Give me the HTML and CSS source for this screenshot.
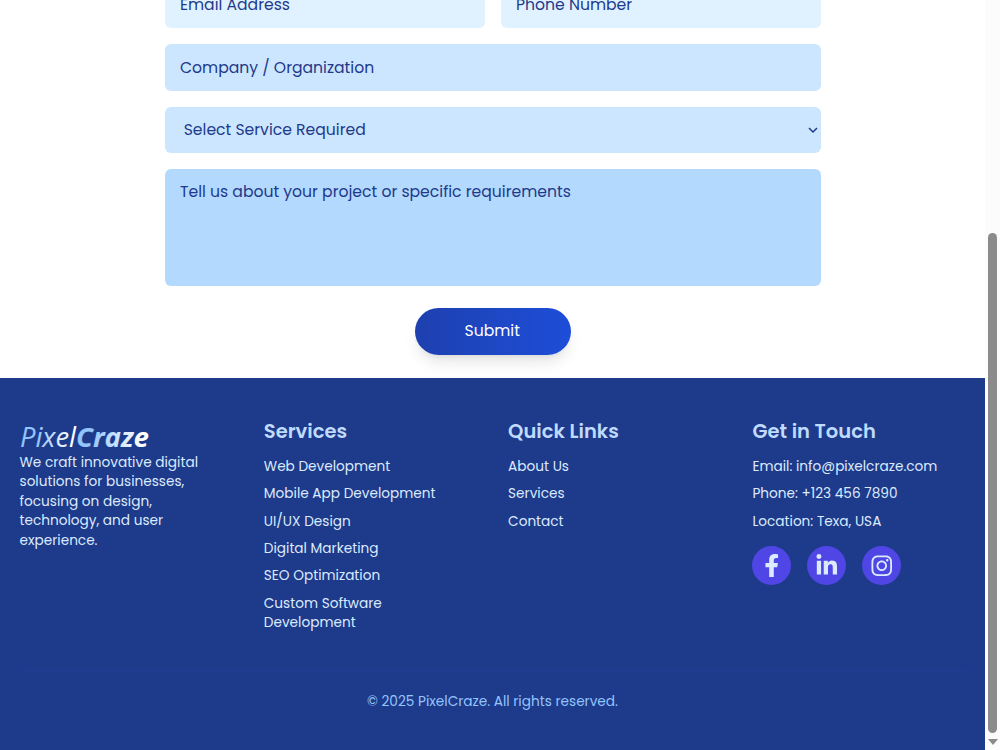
FILE: index.html
```html
<!DOCTYPE html>
<html lang="en">
<head>
    <meta charset="UTF-8">
    <title>PixelCraze</title>
    <link rel="stylesheet" href="styles.css">
</head>
<body>
    <div class="page">
        <form class="contact-form">
            <div class="row">
                <input class="field light" type="email" placeholder="Email Address">
                <input class="field light" type="tel" placeholder="Phone Number">
            </div>
            <input class="field" type="text" placeholder="Company / Organization">
            <div class="select-wrap">
                <select class="field select">
                    <option>Select Service Required</option>
                </select>
                <svg class="chevron" width="10" height="7" viewBox="0 0 10 7"><path d="M1 1l4 4 4-4" fill="none" stroke="#1e3a8a" stroke-width="1.5"/></svg>
            </div>
            <textarea class="field message" placeholder="Tell us about your project or specific requirements"></textarea>
            <button class="submit" type="button">Submit</button>
        </form>

        <footer class="footer">
            <div class="columns">
                <div class="column">
                    <div class="logo">
                        <svg width="140" height="36" viewBox="0 0 140 36">
                            <defs>
                                <linearGradient id="thin" x1="0" x2="1">
                                    <stop offset="0.3" stop-color="#93c5fd"/>
                                    <stop offset="0.9" stop-color="#ffffff"/>
                                </linearGradient>
                                <linearGradient id="thick" x1="0" x2="1">
                                    <stop offset="0.2" stop-color="#93c5fd"/>
                                    <stop offset="0.9" stop-color="#ffffff"/>
                                </linearGradient>
                            </defs>
                            <text class="logo-thin" x="0" y="29" textLength="56" lengthAdjust="spacingAndGlyphs" fill="url(#thin)">Pixel</text>
                            <text class="logo-thick" x="56" y="29" textLength="73" lengthAdjust="spacingAndGlyphs" fill="url(#thick)">Craze</text>
                        </svg>
                    </div>
                    <p class="about">We craft innovative digital<br>solutions for businesses,<br>focusing on design,<br>technology, and user<br>experience.</p>
                </div>
                <div class="column">
                    <h3>Services</h3>
                    <ul>
                        <li>Web Development</li>
                        <li>Mobile App Development</li>
                        <li>UI/UX Design</li>
                        <li>Digital Marketing</li>
                        <li>SEO Optimization</li>
                        <li>Custom Software<br>Development</li>
                    </ul>
                </div>
                <div class="column">
                    <h3>Quick Links</h3>
                    <ul>
                        <li>About Us</li>
                        <li>Services</li>
                        <li>Contact</li>
                    </ul>
                </div>
                <div class="column">
                    <h3>Get in Touch</h3>
                    <ul>
                        <li>Email: info@pixelcraze.com</li>
                        <li>Phone: +123 456 7890</li>
                        <li>Location: Texa, USA</li>
                    </ul>
                    <div class="social">
                        <a class="icon">
                            <svg width="23.5" height="23.5" viewBox="0 0 320 512"><path d="M279.14 288l14.22-92.66h-88.91v-60.13c0-25.35 12.42-50.06 52.24-50.06h40.42V6.26S260.43 0 225.36 0c-73.22 0-121.08 44.38-121.08 124.72v70.62H22.89V288h81.39v224h100.17V288z"/></svg>
                        </a>
                        <a class="icon">
                            <svg width="23.5" height="23.5" viewBox="0 0 448 512"><path d="M100.28 448H7.4V148.9h92.88zM53.79 108.1C24.09 108.1 0 83.5 0 53.8a53.79 53.79 0 0 1 107.58 0c0 29.7-24.1 54.3-53.79 54.3zM447.9 448h-92.68V302.4c0-34.7-.7-79.2-48.29-79.2-48.29 0-55.69 37.7-55.69 76.7V448h-92.78V148.9h89.08v40.8h1.3c12.4-23.5 42.69-48.3 87.88-48.3 94 0 111.28 61.9 111.28 142.3V448z"/></svg>
                        </a>
                        <a class="icon">
                            <svg width="23.5" height="23.5" viewBox="0 0 448 512"><path d="M224.1 141c-63.6 0-114.9 51.3-114.9 114.9s51.3 114.9 114.9 114.9S339 319.5 339 255.9 287.7 141 224.1 141zm0 189.6c-41.1 0-74.7-33.5-74.7-74.7s33.5-74.7 74.7-74.7 74.7 33.5 74.7 74.7-33.6 74.7-74.7 74.7zm146.4-194.3c0 14.9-12 26.8-26.8 26.8-14.9 0-26.8-12-26.8-26.8s12-26.8 26.8-26.8 26.8 12 26.8 26.8zm76.1 27.2c-1.7-35.9-9.9-67.7-36.2-93.9-26.2-26.2-58-34.4-93.9-36.2-37-2.1-147.9-2.1-184.9 0-35.8 1.7-67.6 9.9-93.9 36.1s-34.4 58-36.2 93.9c-2.1 37-2.1 147.9 0 184.9 1.7 35.9 9.9 67.7 36.2 93.9s58 34.4 93.9 36.2c37 2.1 147.9 2.1 184.9 0 35.9-1.7 67.7-9.9 93.9-36.2 26.2-26.2 34.4-58 36.2-93.9 2.1-37 2.1-147.8 0-184.8zM398.8 388c-7.8 19.6-22.9 34.7-42.6 42.6-29.5 11.7-99.5 9-132.1 9s-102.7 2.6-132.1-9c-19.6-7.8-34.7-22.9-42.6-42.6-11.7-29.5-9-99.5-9-132.1s-2.6-102.7 9-132.1c7.8-19.6 22.9-34.7 42.6-42.6 29.5-11.7 99.5-9 132.1-9s102.7-2.6 132.1 9c19.6 7.8 34.7 22.9 42.6 42.6 11.7 29.5 9 99.5 9 132.1s2.7 102.7-9 132.1z"/></svg>
                        </a>
                    </div>
                </div>
            </div>
            <div class="copyright">© 2025 PixelCraze. All rights reserved.</div>
        </footer>
    </div>
    <div class="scrollbar">
        <div class="thumb"></div>
        <div class="arrow"></div>
    </div>
</body>
</html>
```
FILE: styles.css
```css
* {
    box-sizing: border-box;
}
body {
    margin: 0;
    display: flex;
    height: 750px;
    overflow: hidden;
    background: #fff;
    font-family: Poppins, Inter, sans-serif;
}
.page {
    width: 985px;
    height: 750px;
}
.contact-form {
    width: 656px;
    height: 397px;
    margin: -19px 0 0 164.7px;
    display: flex;
    flex-direction: column;
    gap: 16px;
}
.row {
    display: flex;
    gap: 16px;
}
.field {
    width: 100%;
    height: 47px;
    flex-shrink: 0;
    padding: 0 15.3px;
    border: none;
    border-radius: 6px;
    background: #cce6ff;
    color: #1e3a8a;
    font: 15.63px Poppins, Inter, sans-serif;
}
.row .field {
    flex: 1;
    min-width: 0;
}
.field::placeholder {
    color: #1e3a8a;
    opacity: 1;
}
.light {
    background: #e0f2ff;
}
.select-wrap {
    position: relative;
    height: 46px;
    margin-bottom: -0.5px;
}
.select {
    display: block;
    height: 46px;
    padding: 0 15px 1px 19px;
    appearance: none;
}
.chevron {
    position: absolute;
    right: 3px;
    top: 20px;
}
.message {
    height: 117.5px;
    padding-top: 11.4px;
    line-height: 23.4px;
    background: #b3d9ff;
    resize: none;
}
.submit {
    align-self: center;
    width: 156px;
    height: 47px;
    margin-top: 6px;
    padding: 0 7px 2px 6px;
    border: none;
    border-radius: 24px;
    background: linear-gradient(to right, #1e40af, #1d4ed8);
    box-shadow: 0 10px 15px -3px rgba(0, 0, 0, 0.1), 0 4px 6px -4px rgba(0, 0, 0, 0.1);
    color: #fff;
    font: 15.63px Poppins, Inter, sans-serif;
}
.footer {
    height: 371.5px;
    padding: 39.6px 19.5px 0;
    background: #1e3a8a;
    color: #dbeafe;
    font-size: 13.67px;
    line-height: 19.53px;
}
.columns {
    display: grid;
    grid-template-columns: repeat(4, 1fr);
    gap: 31.2px;
    height: 252.4px;
}
.column {
    white-space: nowrap;
}
.logo {
    height: 35px;
}
.logo svg {
    display: block;
    overflow: visible;
}
.logo-thin, .logo-thick {
    font-family: "Open Sans", sans-serif;
    font-size: 27px;
    font-style: italic;
    font-weight: 400;
}
.logo-thick {
    font-weight: 700;
}
.about {
    margin: 0;
}
h3 {
    margin: 0 0 12.1px;
    color: #bfdbfe;
    font-size: 19.53px;
    font-weight: 600;
    line-height: 27.3px;
}
ul {
    margin: 0;
    padding: 0;
    list-style: none;
}
li {
    margin-bottom: 7.81px;
}
.social {
    display: flex;
    gap: 15.8px;
    margin-top: 15px;
}
.icon {
    display: flex;
    justify-content: center;
    align-items: center;
    width: 39px;
    height: 39px;
    border-radius: 50%;
    background: #4f46e5;
}
.icon svg {
    fill: #dbeafe;
}
.copyright {
    padding-top: 21.2px;
    border-top: 1px solid #1e3d95;
    color: #93c5fd;
    text-align: center;
}
.scrollbar {
    width: 15px;
    height: 750px;
    padding: 233px 0 0 3px;
    background: #fcfcfc;
}
.thumb {
    width: 9px;
    height: 500px;
    border-radius: 5px;
    background: #8b8b8b;
}
.arrow {
    width: 10px;
    height: 6px;
    margin-top: 6px;
    background: #8b8b8b;
    clip-path: polygon(0 0, 100% 0, 50% 100%);
}
```
